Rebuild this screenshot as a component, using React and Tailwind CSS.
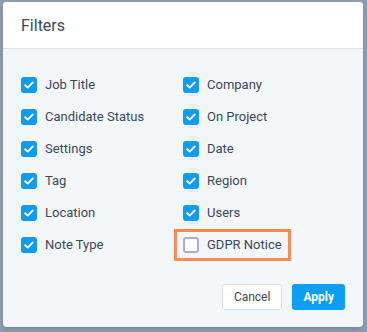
import { useState } from 'react';

const LEFT = ['Job Title', 'Candidate Status', 'Settings', 'Tag', 'Location', 'Note Type'];
const RIGHT = ['Company', 'On Project', 'Date', 'Region', 'Users', 'GDPR Notice'];

function Box({ checked }) {
  if (!checked) {
    return <span className="w-4 h-4 rounded-[3px] border-2 border-[#a7b1bf] bg-white shrink-0" />;
  }
  return (
    <span className="w-4 h-4 rounded-[3px] bg-[#0d9cf0] flex items-center justify-center shrink-0">
      <svg width="10" height="8" viewBox="0 0 10 8" fill="none">
        <path d="M1.2 4.2 L3.8 6.6 L8.8 1.4" stroke="white" strokeWidth="1.9" strokeLinecap="round" strokeLinejoin="round" />
      </svg>
    </span>
  );
}

function Item({ label, checked, onToggle }) {
  return (
    <label className="flex items-center gap-[8px] h-8 cursor-pointer" onClick={onToggle}>
      <Box checked={checked} />
      <span className="text-[13px] text-[#3c4858]">{label}</span>
    </label>
  );
}

export default function App() {
  const [state, setState] = useState(() => {
    const s = {};
    [...LEFT, ...RIGHT].forEach((k) => { s[k] = k !== 'GDPR Notice'; });
    return s;
  });
  const toggle = (k) => setState((p) => ({ ...p, [k]: !p[k] }));

  return (
    <div className="w-[367px] h-[332px] bg-[#8e9cae] pt-[2px] pl-[3px]" style={{ fontFamily: 'Roboto, "Liberation Sans", sans-serif' }}>
      <div className="w-[360px] h-[325px] rounded-[4px] bg-[#f4f7fa] overflow-hidden shadow-md flex flex-col">
        {/* Header */}
        <div className="h-[47px] bg-white border-b border-[#dde3ea] flex items-center px-[18px] pt-[2px]">
          <span className="text-[16px] text-[#3c4858]">Filters</span>
        </div>

        {/* Options */}
        <div className="grid grid-cols-[162px_162px] pl-[18px] pt-[20px]">
          {LEFT.map((l, i) => {
            const r = RIGHT[i];
            return [
              <Item key={l} label={l} checked={state[l]} onToggle={() => toggle(l)} />,
              r === 'GDPR Notice' ? (
                <div key={r} className="h-8 flex items-center">
                  <div className="-ml-[9px] pl-[6px] pr-[6px] border-[3px] border-[#fa8b55] h-[32px] flex items-center">
                    <Item label={r} checked={state[r]} onToggle={() => toggle(r)} />
                  </div>
                </div>
              ) : (
                <Item key={r} label={r} checked={state[r]} onToggle={() => toggle(r)} />
              ),
            ];
          })}
        </div>

        {/* Footer */}
        <div className="flex justify-end gap-[10px] pr-[18px] mt-[23px]">
          <button className="h-[26px] px-[11px] rounded-[3px] border border-[#dbe1e8] bg-white text-[12px] text-[#3c4858]">
            Cancel
          </button>
          <button className="h-[26px] px-[11px] rounded-[3px] bg-[#0a9ef5] text-[12px] font-bold text-white">
            Apply
          </button>
        </div>
      </div>
    </div>
  );
}
